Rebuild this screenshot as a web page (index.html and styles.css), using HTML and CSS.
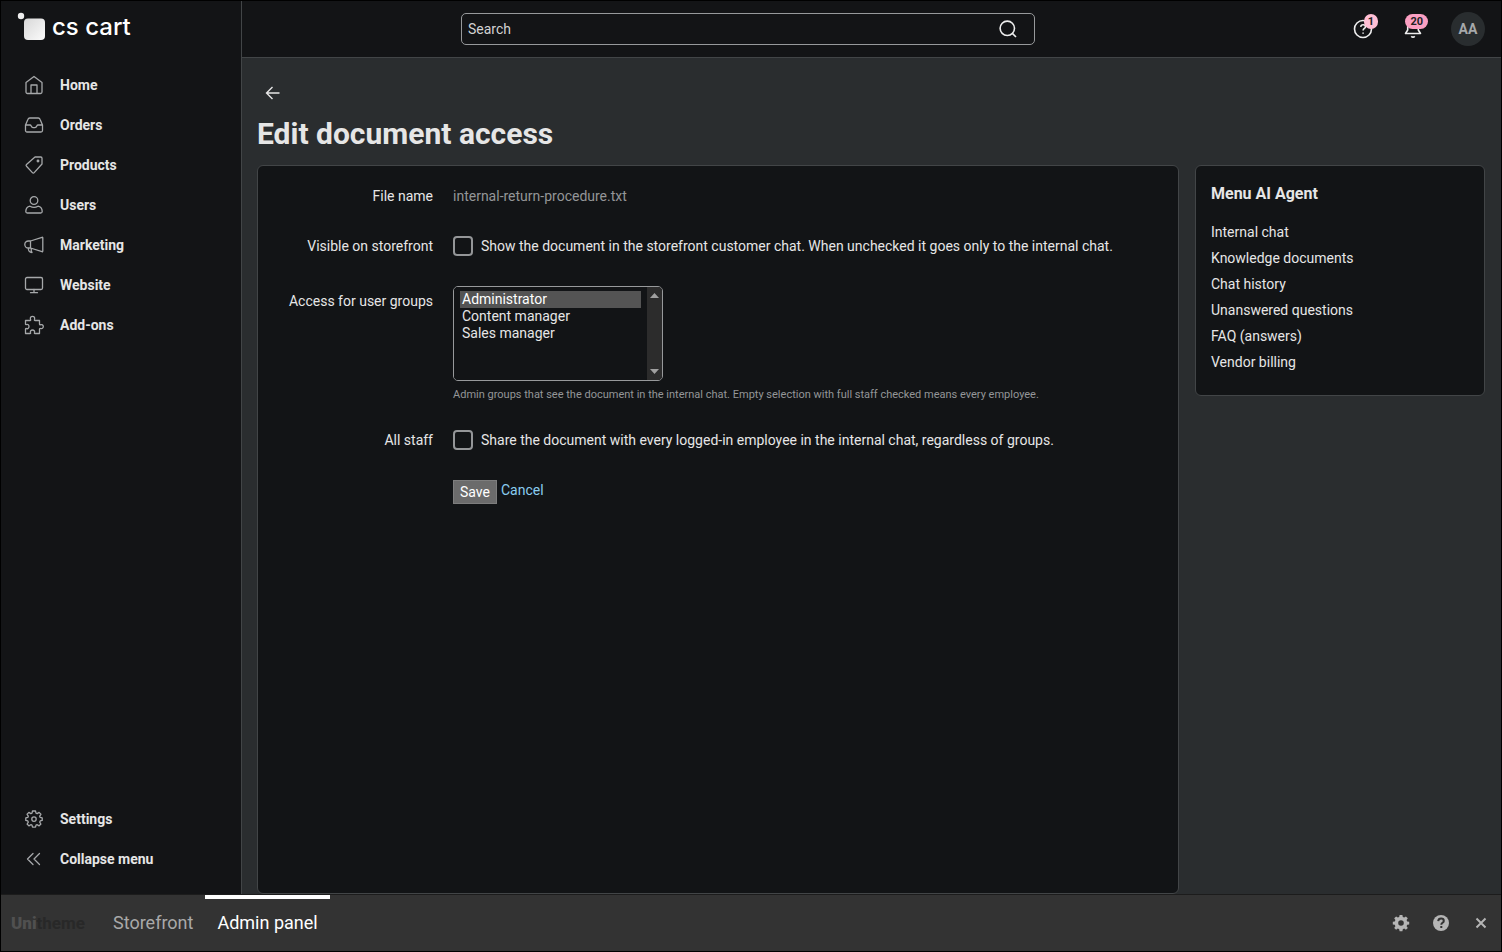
FILE: index.html
```html
<!DOCTYPE html>
<html lang="en">
<head>
  <meta charset="UTF-8">
  <title>Edit document access</title>
  <meta name="viewport" content="width=device-width, initial-scale=1">
  <link rel="stylesheet" href="styles.css">
</head>
<body>
  <div class="layout">
    <aside class="sidebar">
      <a href="#" class="logo">
        <svg width="30" height="30" viewBox="0 0 30 30">
          <defs>
            <linearGradient id="logo-fill" x1="0" y1="0" x2="1" y2="1">
              <stop offset="0" stop-color="#d8d8d8"/>
              <stop offset="1" stop-color="#fbfbfb"/>
            </linearGradient>
          </defs>
          <circle cx="4" cy="4" r="3.200" fill="#eee"/>
          <rect x="7" y="6.500" width="21" height="21.500" rx="4" fill="url(#logo-fill)"/>
        </svg>
        <span>cs cart</span>
      </a>
      <nav class="menu">
        <a href="#"><svg class="icon" viewBox="0 0 20 20"><path d="M2 7.600 10 1.500l8 6.100v9.400a1.500 1.500 0 0 1-1.500 1.500h-13A1.500 1.500 0 0 1 2 17zM7 18.500V10h6v8.500"/></svg>Home</a>
        <a href="#"><svg class="icon" viewBox="0 0 20 20"><path d="M1.500 10 4 4.300c.3-.8.900-1.300 1.700-1.300h8.600c.8 0 1.400.5 1.700 1.300l2.500 5.700v5.500a1.500 1.500 0 0 1-1.500 1.500H3a1.500 1.500 0 0 1-1.500-1.500zM1.500 10H6c.7 0 .9.400 1.200 1.100.4 1 .9 1.500 1.800 1.500h2c.9 0 1.400-.5 1.800-1.500.3-.7.5-1.100 1.200-1.100h4.500"/></svg>Orders</a>
        <a href="#"><svg class="icon" viewBox="0 0 20 20"><path d="M11 2h5.800c.8 0 1.200.4 1.200 1.200V9l-7.800 8.600c-.6.7-1.200.7-1.800 0L2.500 11.200c-.6-.6-.6-1.200 0-1.800z"/><circle cx="14" cy="6" r=".8"/></svg>Products</a>
        <a href="#"><svg class="icon" viewBox="0 0 20 20"><circle cx="10" cy="5.500" r="3.800"/><path d="M6 11.200c-2.500.6-4.200 3-4.200 5.300 0 1 .5 1.500 1.500 1.500h13.400c1 0 1.500-.5 1.500-1.500 0-2.300-1.700-4.700-4.200-5.300-2.300 1.400-5.700 1.400-8 0z"/></svg>Users</a>
        <a href="#"><svg class="icon" viewBox="0 0 20 20"><path d="M6.500 6 18 2.300c.5-.1.800.1.800.6v13.200c0 .5-.3.700-.8.600L6.500 13zM6.500 6H4.300a3.500 3.500 0 0 0 0 7h2.200M4.300 13c0 2.500 1.200 4.500 3.700 4.500-.8-1.300-1-2.700-.7-4"/></svg>Marketing</a>
        <a href="#"><svg class="icon" viewBox="0 0 20 20"><rect x="1.500" y="2.500" width="17" height="12" rx="1.500"/><path d="M10 14.500v3.200M6.500 17.700h7"/></svg>Website</a>
        <a href="#"><svg class="icon" viewBox="0 0 20 20"><path d="M1.500 5.500H6c.7 0 .9-.4.500-1.100C5.900 2.700 6.900 1.300 8.500 1.300s2.600 1.400 2 3.100c-.3.700-.1 1.100.6 1.100h4.400V9c0 .7.400 1 1.100.7 1.400-.5 2.700.4 2.700 1.900s-1.300 2.400-2.700 1.900c-.7-.3-1.100 0-1.100.7v4.300H11c-.7 0-.8-.4-.5-1.100.5-1.300-.5-2.400-2-2.400s-2.500 1.100-2 2.400c.3.700.2 1.100-.5 1.100H1.500v-4.300c0-.7.400-.9 1.100-.6 1.300.5 2.400-.5 2.400-2S3.900 9.100 2.600 9.500c-.7.300-1.100 0-1.100-.6z"/></svg>Add-ons</a>
      </nav>
      <nav class="menu menu-bottom">
        <a href="#"><svg class="icon" viewBox="0 0 20 20"><path d="M8.500 2h3l.5 2.100 1.200.5 1.900-1.200 1.800 1.900-1.200 1.900.5 1.200 2 .5v2.500l-2 .5-.5 1.300 1.200 1.800-1.800 1.900-1.900-1.200-1.200.5-.5 2h-3l-.5-2-1.200-.5-1.900 1.200-1.800-1.900 1.200-1.800-.5-1.300-2-.5V8.900l2-.5.5-1.200-1.200-1.900 1.800-1.900 1.900 1.200L8 4.100z"/><circle cx="10" cy="10.100" r="2.200"/></svg>Settings</a>
        <a href="#"><svg class="icon" viewBox="0 0 20 20"><path d="m9 4.500-5.500 5.500L9 15.500M15.500 4.500 10 10l5.500 5.500"/></svg>Collapse menu</a>
      </nav>
    </aside>

    <div class="main">
      <header class="topbar">
        <form class="search">
          <input type="text" placeholder="Search" aria-label="Search">
          <button type="button" aria-label="Find">
            <svg width="20" height="20" viewBox="0 0 20 20"><circle cx="9.300" cy="9.300" r="7.200"/><path d="m14.600 14.600 3.400 3.400"/></svg>
          </button>
        </form>
        <div class="topbar-actions">
          <button type="button" class="top-btn" aria-label="Help">
            <svg width="20" height="20" viewBox="0 0 20 20"><circle cx="10" cy="10" r="8.500"/><path d="M7.700 7.800c.2-1.400 1.100-2.100 2.400-2.100 1.400 0 2.400.8 2.400 2 0 1.700-2.400 1.800-2.400 3.700M10.100 13.500v1.300"/></svg>
            <span class="badge">1</span>
          </button>
          <button type="button" class="top-btn" aria-label="Notifications">
            <svg width="20" height="20" viewBox="0 0 20 20"><path d="M2.500 14.500h15l-2.200-3.500V7.500a5.300 5.300 0 0 0-10.600 0V11zM8.300 17.200c.9 1.200 2.500 1.200 3.400 0"/></svg>
            <span class="badge badge-hot">20</span>
          </button>
          <button type="button" class="user-btn"><span class="avatar">AA</span></button>
        </div>
      </header>

      <main class="content">
        <a href="#" class="back" aria-label="Back">
          <svg width="16" height="16" viewBox="0 0 16 16"><path d="M14.500 8h-13M7.500 2l-6 6 6 6"/></svg>
        </a>
        <h1>Edit document access</h1>
        <div class="columns">
          <form class="panel">
            <div class="row">
              <span class="label">File name</span>
              <div class="muted">internal-return-procedure.txt</div>
            </div>
            <div class="row">
              <label class="label" for="storefront">Visible on storefront</label>
              <div class="check">
                <input type="checkbox" id="storefront">
                <label for="storefront">Show the document in the storefront customer chat. When unchecked it goes only to the internal chat.</label>
              </div>
            </div>
            <div class="row row-select">
              <label class="label" for="groups">Access for user groups</label>
              <div>
                <div class="listbox">
                  <select id="groups" multiple>
                    <option selected>Administrator</option>
                    <option>Content manager</option>
                    <option>Sales manager</option>
                  </select>
                  <div class="scroll-track">
                    <svg width="9" height="5" viewBox="0 0 9 5"><path d="M0 5h9L4.500 0z"/></svg>
                    <svg width="9" height="5" viewBox="0 0 9 5"><path d="M0 0h9L4.500 5z"/></svg>
                  </div>
                </div>
                <p class="hint">Admin groups that see the document in the internal chat. Empty selection with full staff checked means every employee.</p>
              </div>
            </div>
            <div class="row">
              <label class="label" for="staff">All staff</label>
              <div class="check">
                <input type="checkbox" id="staff">
                <label for="staff">Share the document with every logged-in employee in the internal chat, regardless of groups.</label>
              </div>
            </div>
            <div class="row">
              <span></span>
              <div class="buttons">
                <button type="button" class="save">Save</button>
                <a href="#">Cancel</a>
              </div>
            </div>
          </form>
          <aside class="side-panel">
            <h2>Menu AI Agent</h2>
            <a href="#">Internal chat</a>
            <a href="#">Knowledge documents</a>
            <a href="#">Chat history</a>
            <a href="#">Unanswered questions</a>
            <a href="#">FAQ (answers)</a>
            <a href="#">Vendor billing</a>
          </aside>
        </div>
      </main>
    </div>
  </div>

  <footer class="bottombar">
    <span class="theme"><b>Uni</b>theme</span>
    <a href="#" class="tab">Storefront</a>
    <a href="#" class="tab active">Admin panel</a>
    <div class="tools">
      <button type="button" aria-label="Settings">
        <svg width="20" height="20" viewBox="0 0 20 20"><path fill-rule="evenodd" d="M8.600 2h2.800l.4 2 1.400.6L14.900 3.400l1.900 1.900-1.200 1.700.6 1.400 2 .3v2.700l-2 .4-.6 1.400 1.200 1.700-1.900 1.900-1.700-1.200-1.400.6-.4 2H8.600l-.4-2-1.400-.6-1.700 1.200-1.900-1.900 1.200-1.700-.6-1.400-2-.4V8.700l2-.3.6-1.400-1.200-1.700 1.900-1.900 1.700 1.200L8.200 4zM10 7.200a2.800 2.800 0 1 0 0 5.600 2.800 2.800 0 0 0 0-5.600z"/></svg>
      </button>
      <button type="button" aria-label="Help">
        <svg width="20" height="20" viewBox="0 0 20 20"><circle cx="10" cy="10" r="8"/><path class="mark" d="M7.200 8.200c.2-1.800 1.300-2.600 2.900-2.600s2.700.9 2.700 2.300c0 1.900-2.500 1.900-2.500 3.800M10.300 12.900v2"/></svg>
      </button>
      <button type="button" aria-label="Close">
        <svg width="20" height="20" viewBox="0 0 20 20"><path class="cross" d="m5.500 5.500 9 9M14.500 5.500l-9 9"/></svg>
      </button>
    </div>
  </footer>
</body>
</html>
```

FILE: styles.css
```css
* {
  box-sizing: border-box;
}
body {
  margin: 0;
  min-height: 100vh;
  display: flex;
  flex-direction: column;
  border: 1px solid #000;
  font-family: Roboto, "Liberation Sans", sans-serif;
  font-size: 14px;
  line-height: 20px;
  background: #2a2d2f;
  color: #e6e6e6;
  color-scheme: dark;
}
a {
  color: inherit;
  text-decoration: none;
}
button {
  font: inherit;
  color: inherit;
  background: none;
  border: none;
  padding: 0;
  cursor: pointer;
}
svg {
  display: block;
  flex-shrink: 0;
}
.layout {
  flex: 1;
  display: flex;
}

/* Sidebar */
.sidebar {
  width: 241px;
  flex-shrink: 0;
  display: flex;
  flex-direction: column;
  padding: 11px 0 15px;
  background: #131416;
  border-right: 1px solid #424547;
}
.logo {
  display: flex;
  align-items: center;
  gap: 5px;
  height: 30px;
  padding-left: 16px;
  margin-bottom: 23px;
  font-family: Inter, sans-serif;
  font-size: 24px;
  line-height: 30px;
  font-weight: 500;
  color: #fff;
}
.menu a {
  display: flex;
  align-items: center;
  gap: 16px;
  height: 40px;
  padding-left: 23px;
  font-weight: 700;
}
.menu-bottom {
  margin-top: auto;
}
.icon {
  width: 20px;
  height: 20px;
  fill: none;
  stroke: #a6a8aa;
  stroke-width: 1.3;
  stroke-linejoin: round;
  stroke-linecap: round;
}

/* Top bar */
.main {
  flex: 1;
  min-width: 0;
  display: flex;
  flex-direction: column;
}
.topbar {
  display: grid;
  grid-template-columns: 219fr 574fr 466fr;
  align-items: center;
  height: 57px;
  background: #131416;
  border-bottom: 1px solid #424547;
}
.search {
  grid-column: 2;
  display: flex;
  align-items: center;
  height: 32px;
  padding: 0 16px 0 6px;
  border: 1px solid #97999b;
  border-radius: 5px;
}
.search input {
  flex: 1;
  min-width: 0;
  padding: 0;
  border: none;
  outline: none;
  background: none;
  color: inherit;
  font: inherit;
}
.search input::placeholder {
  color: #d2d2d2;
}
.search svg,
.top-btn svg {
  fill: none;
  stroke: #eee;
  stroke-width: 1.6;
  stroke-linejoin: round;
}
.topbar-actions {
  display: flex;
  justify-content: flex-end;
  align-items: center;
  gap: 20px;
  padding-right: 13px;
}
.top-btn {
  position: relative;
  width: 30px;
  height: 30px;
  display: flex;
  align-items: center;
  justify-content: center;
}
.badge {
  position: absolute;
  top: 0;
  right: 0;
  min-width: 14px;
  padding: 0 4px;
  border-radius: 8px;
  background: #ffbfd5;
  color: #222;
  font-size: 11px;
  line-height: 15px;
  font-weight: 700;
}
.badge-hot {
  padding: 0 5px;
  background: #fb9fc2;
}
.user-btn {
  width: 40px;
}
.avatar {
  display: block;
  width: 34px;
  margin: 0 auto;
  border-radius: 50%;
  background: #292d2f;
  color: #a6a8aa;
  line-height: 34px;
  font-weight: 700;
}

/* Content */
.content {
  flex: 1;
  display: flex;
  flex-direction: column;
  padding: 27px 16px 0 15px;
}
.back {
  align-self: flex-start;
  padding: 0 8px;
}
.back svg {
  fill: none;
  stroke: #e6e6e6;
  stroke-width: 1.4;
}
h1 {
  margin: 14px 0 12px;
  font-size: 30px;
  line-height: 38px;
}
.columns {
  flex: 1;
  display: flex;
  align-items: flex-start;
  gap: 16px;
}
.panel,
.side-panel {
  background: #121416;
  border: 1px solid #424547;
  border-radius: 6px;
}
.panel {
  flex: 1;
  align-self: stretch;
  padding: 20px 15px;
}
.row {
  display: grid;
  grid-template-columns: 160px 1fr;
  gap: 20px;
  margin-bottom: 30px;
}
.label {
  text-align: right;
}
.row-select .label {
  padding-top: 5px;
}
.muted {
  color: #949698;
}
.check {
  display: flex;
  align-items: center;
  gap: 8px;
}
.check input {
  appearance: none;
  flex-shrink: 0;
  width: 20px;
  height: 20px;
  margin: 0;
  border: 2px solid #949698;
  border-radius: 4px;
}
.check input:checked {
  background: #949698;
}
.listbox {
  display: flex;
  width: 210px;
  height: 95px;
  border: 1px solid #97999b;
  border-radius: 5px;
  overflow: hidden;
}
select {
  flex: 1;
  min-width: 0;
  height: 100%;
  padding: 4px 6px;
  border: none;
  outline: none;
  scrollbar-width: none;
  background: #121416;
  color: inherit;
  font: inherit;
}
option {
  min-height: 17px;
  padding: 0 2px;
  line-height: 17px;
}
.scroll-track {
  width: 15px;
  display: flex;
  flex-direction: column;
  justify-content: space-between;
  align-items: center;
  padding: 6px 0;
  background: #2c2c2c;
}
.scroll-track svg {
  fill: #a0a0a0;
}
.hint {
  margin: 8px 0 0;
  font-size: 11px;
  line-height: 11px;
  color: #949698;
}
.buttons {
  display: flex;
  align-items: flex-start;
  gap: 4px;
}
.save {
  height: 24px;
  padding: 0 6px;
  background: #6b6b6b;
  border: 1px solid #7d7d7d;
  color: #fff;
}
.buttons a {
  color: #8acdf0;
}
.side-panel {
  width: 290px;
  flex-shrink: 0;
  padding: 15px 15px 20px;
}
.side-panel h2 {
  margin: 0 0 12px;
  font-size: 16px;
  line-height: 26px;
}
.side-panel a {
  display: block;
  line-height: 26px;
}

/* Bottom bar */
.bottombar {
  display: flex;
  align-items: stretch;
  height: 57px;
  padding: 0 10px;
  border-top: 1px solid #1c1c1c;
  background: #333;
}
.theme {
  width: 90px;
  color: #282828;
  font-size: 17px;
  font-weight: 700;
  line-height: 56px;
}
.theme b {
  color: #505050;
}
.tab {
  padding: 0 12px;
  border-top: 4px solid transparent;
  color: #a9a9a9;
  font-size: 18px;
  line-height: 48px;
}
.tab.active {
  border-top-color: #fff;
  color: #fff;
}
.tools {
  display: flex;
  align-items: center;
  gap: 20px;
  margin-left: auto;
}
.tools svg {
  fill: #b5b5b5;
}
.tools .mark,
.tools .cross {
  fill: none;
  stroke: #333;
  stroke-width: 2;
}
.tools .cross {
  stroke: #b5b5b5;
}
```
